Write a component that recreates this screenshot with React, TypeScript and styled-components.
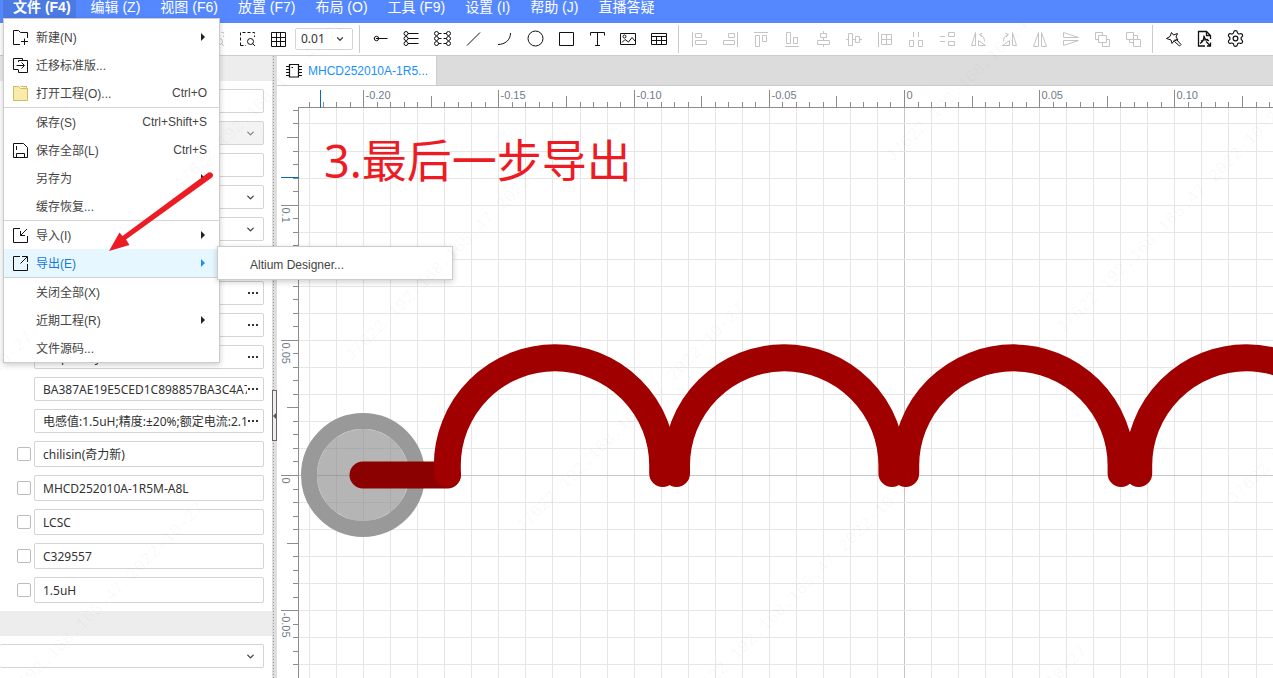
import React, { useEffect, useState } from 'react';
import styled, { createGlobalStyle, css } from 'styled-components';
import { ChevronDown, Settings } from 'lucide-react';

const uiFont = '"Liberation Sans", "Noto Sans CJK SC", sans-serif';
const formFont = '"Noto Sans", "Noto Sans CJK SC", sans-serif';

const GlobalStyle = createGlobalStyle`
  * { box-sizing: border-box; }
  body { margin: 0; overflow: hidden; background: #fff; font-family: ${uiFont}; font-size: 12px; color: #333; }
  button, input, select { font: inherit; color: inherit; margin: 0; }
  button { border: 0; background: none; padding: 0; }
  ul { list-style: none; margin: 0; padding: 0; }
`;

const Shell = styled.div`
  position: relative;
  display: flex;
  flex-direction: column;
  height: 100vh;
  overflow: hidden;
`;

/* ---------- Menu bar and drop-down menus ---------- */

const MenuBar = styled.nav`
  position: relative;
  z-index: 5;
  display: flex;
  align-items: flex-start;
  gap: 5px;
  flex: none;
  height: 23px;
  padding-left: 3px;
  background: #5588ff;
`;

const MenuTitle = styled.button<{ $open?: boolean }>`
  height: 18px;
  padding: 0 5px 3px 10px;
  font-size: 14px;
  line-height: 15px;
  white-space: nowrap;
  color: #fff;
  ${(p) => p.$open && css`background: #4c7ae5; font-weight: bold;`}
`;

const Dropdown = styled.ul`
  position: absolute;
  top: 18px;
  left: 3px;
  width: 217px;
  padding-top: 4px;
  background: #fff;
  border: 1px solid #ccc;
  box-shadow: 0 2px 6px rgba(0, 0, 0, 0.2);
`;

const MenuEntry = styled.li<{ $divided?: boolean }>`
  position: relative;
  ${(p) => p.$divided && css`border-bottom: 1px solid #d4d4d4;`}
`;

const MenuButton = styled.button<{ $active?: boolean }>`
  display: grid;
  grid-template-columns: 16px 1fr auto;
  align-items: center;
  column-gap: 7px;
  width: 100%;
  height: 28px;
  padding: 0 12px 0 9px;
  text-align: left;
  color: ${(p) => (p.$active ? '#1677e0' : '#444')};
  background: ${(p) => (p.$active ? '#e6f7ff' : 'transparent')};
  svg { color: #111; }
`;

const MenuLabel = styled.span`
  padding-bottom: 2px;
`;

const SubArrow = styled.span<{ $active?: boolean }>`
  width: 0;
  height: 0;
  margin-right: 2px;
  border: 4px solid transparent;
  border-left: 4px solid ${(p) => (p.$active ? '#1890ff' : '#222')};
  border-right: 0;
`;

const SubMenu = styled.ul`
  position: absolute;
  top: -3px;
  left: 213px;
  width: 236px;
  padding-top: 4px;
  background: #fff;
  border: 1px solid #ccc;
  box-shadow: 0 2px 6px rgba(0, 0, 0, 0.2);
`;

const SubMenuButton = styled.button`
  width: 100%;
  height: 28px;
  padding: 0 32px;
  text-align: left;
  color: #444;
`;

/* ---------- Toolbar ---------- */

const Toolbar = styled.div`
  display: flex;
  align-items: flex-start;
  flex: none;
  height: 33px;
  padding-left: 201px;
  background: #fff;
  border-bottom: 1px solid #ccc;
`;

const ToolButton = styled.button<{ $disabled?: boolean }>`
  display: flex;
  align-items: center;
  justify-content: center;
  flex: none;
  width: 31px;
  height: 31px;
  color: ${(p) => (p.$disabled ? '#c4c4c4' : '#111')};
`;

const Divider = styled.span`
  flex: none;
  width: 1px;
  height: 28px;
  margin: 2px 5px 0 3px;
  background: #ccc;
`;

const SelectBox = styled.span<{ $tone?: 'muted' | 'tool' | 'open' }>`
  display: grid;
  align-items: center;
  height: 24px;
  border: 1px solid #d4d4d4;
  border-radius: 2px;
  background: ${(p) => (p.$tone === 'muted' ? '#f3f3f3' : '#fff')};
  select, svg { grid-area: 1 / 1; }
  svg { justify-self: end; margin-right: 7px; color: ${(p) => (p.$tone === 'muted' ? '#888' : '#444')}; pointer-events: none; }
  ${(p) => p.$tone === 'tool' && css`
    flex: none;
    width: 58px;
    height: 22px;
    margin: 5px 3px 0 1px;
  `}
  ${(p) => p.$tone === 'open' && css`border-left: 0;`}
`;

const Select = styled.select`
  appearance: none;
  width: 100%;
  height: 20px;
  padding: 0 20px 0 5px;
  border: 0;
  background: transparent;
  font-family: ${formFont};
  line-height: 20px;
  outline: none;
`;

/* ---------- Property panel ---------- */

const Workspace = styled.div`
  display: flex;
  flex: 1;
  min-height: 0;
`;

const Panel = styled.aside`
  flex: none;
  width: 272px;
  overflow: hidden;
  background: #fff;
`;

const SectionBand = styled.div`
  height: 25px;
  background: #ededed;
`;

const FieldList = styled.div`
  display: flex;
  flex-direction: column;
  gap: 8px;
  padding: 8px 8px 8px 17px;
`;

const FieldRow = styled.div`
  display: grid;
  grid-template-columns: 14px minmax(0, 1fr);
  column-gap: 3px;
  align-items: center;
  > :last-child { grid-column: 2; }
`;

const CheckBox = styled.input`
  appearance: none;
  width: 14px;
  height: 14px;
  border: 1px solid #bbb;
  border-radius: 2px;
  background: #fff;
`;

const FieldBox = styled.span<{ $tall?: boolean }>`
  display: flex;
  align-items: center;
  height: ${(p) => (p.$tall ? 26 : 24)}px;
  border: 1px solid #d4d4d4;
  border-radius: 2px;
  background: #fff;
`;

const TextField = styled.input`
  flex: 1;
  min-width: 0;
  height: 20px;
  padding: 0;
  margin-left: 8px;
  border: 0;
  background: transparent;
  font-family: ${formFont};
  color: #333;
  outline: none;
`;

const MoreButton = styled.button`
  display: flex;
  justify-content: center;
  gap: 2px;
  width: 16px;
  padding-right: 4px;
  i { width: 2px; height: 2px; background: #333; }
`;

const BottomField = styled.div`
  padding: 8px 8px 0 0;
`;

const Splitter = styled.div`
  display: flex;
  flex-direction: column;
  flex: none;
  width: 5px;
  background:
    repeating-linear-gradient(to bottom, #999 0 1px, transparent 1px 3px) 1px 0 / 1px 100% no-repeat,
    #dedede;
`;

const CollapseHandle = styled.button`
  display: flex;
  align-items: center;
  width: 5px;
  height: 51px;
  margin-top: 334px;
  border: 1px solid #6f6262;
  background: #eee;
`;

/* ---------- Document area ---------- */

const Main = styled.main`
  display: flex;
  flex-direction: column;
  flex: 1;
  min-width: 0;
`;

const TabStrip = styled.div`
  display: flex;
  flex: none;
  height: 30px;
  background: #dcdcdc;
  border-bottom: 1px solid #ccc;
`;

const Tab = styled.button`
  display: flex;
  align-items: center;
  gap: 7px;
  padding: 0 8px 0 9px;
  background: #fff;
  border-right: 1px solid #ccc;
  color: #1890ff;
  svg { color: #111; }
`;

const CanvasArea = styled.div`
  position: relative;
  flex: 1;
  min-height: 0;
  > svg { display: block; }
`;

const Note = styled.p`
  position: absolute;
  top: 47px;
  left: 47px;
  margin: 0;
  font-family: ${formFont};
  font-size: 45px;
  line-height: 56px;
  white-space: nowrap;
  color: #ed1c24;
`;

const Overlay = styled.svg`
  position: absolute;
  inset: 0;
  z-index: 10;
  width: 100%;
  height: 100%;
  pointer-events: none;
`;

const Glyph = ({ children, size = 15 }: { children: React.ReactNode; size?: number }) => (
  <svg width={size} height={size} viewBox="0 0 15 15" overflow="visible" fill="none" stroke="currentColor" aria-hidden="true">
    {children}
  </svg>
);

const rotateShape = (
  <>
    <path d="M4.500 1.500L.5 14.500H4.500ZM7.500 9.500L14.500 14.500H7.500Z" />
    <path d="M9 3.500C12 4.500 13.500 7 13.500 10.500M11.500 2L8.500 3.500L11 6" />
  </>
);

const drawTools: [string, React.ReactNode][] = [
  ['Pin', <><circle cx="3.500" cy="7.500" r="2.200" /><path d="M1 7.500H2M3 7.500H14.500" /></>],
  ['Pin row', <>{[2.5, 7.5, 12.5].map((y) => <g key={y}><circle cx="2" cy={y} r="2" /><path d={`M4 ${y}H14.500`} /></g>)}</>],
  ['Pin block', <>{[2.5, 7.5, 12.5].map((y) => <g key={y}><circle cx="1.500" cy={y} r="2" /><circle cx="13.500" cy={y} r="2" /><path d={`M3.500 ${y}H6.500M8.500 ${y}H11.500`} /></g>)}</>],
  ['Line', <path d="M1 14.500L14 1.500" />],
  ['Arc', <path d="M1 13.500C8 13.500 13.500 9 13.500 2" />],
  ['Circle', <circle cx="7.500" cy="7.500" r="7.500" />],
  ['Rectangle', <path d="M.5 1.500H14.500V14.500H.5Z" />],
  ['Text', <path d="M.5 4.500V1.500H14.500V4.500M7.500 1.500V14.500M5 14.500H10" />],
  ['Image', <><path d="M-.5 2.500H14.500V13.500H-.5Z" /><circle cx="3.500" cy="5.500" r="1.500" /><path d="M1 11.500L4 8.500L7.500 11L11 6.500L14 10" /></>],
  ['Table', <path d="M-.5 2.500H14.500V13.500H-.5ZM-.5 5.500H14.500M-.5 9.500H14.500M4.500 5.500V13.500M9.500 5.500V13.500" />],
];

const arrangeTools: [string, React.ReactNode][] = [
  ['Align left', <path d="M.5 1V16M3.500 2.500H9.500V6.500H3.500ZM3.500 9.500H14.500V13.500H3.500Z" />],
  ['Align right', <path d="M14.500 1V16M5.500 2.500H11.500V6.500H5.500ZM.5 9.500H11.500V13.500H.5Z" />],
  ['Align top', <path d="M0 1.500H14M1.500 4.500H5.500V15.500H1.500ZM8.500 4.500H12.500V10.500H8.500Z" />],
  ['Align bottom', <path d="M0 15.500H14M1.500 1.500H5.500V12.500H1.500ZM8.500 6.500H12.500V12.500H8.500Z" />],
  ['Align centre', <path d="M7.500 0V2.500M7.500 6.500V9.500M7.500 13.500V16M4.500 2.500H10.500V6.500H4.500ZM1.500 9.500H13.500V13.500H1.500Z" />],
  ['Align middle', <path d="M-1 8.500H1.500M5.500 8.500H8.500M12.500 8.500H15M1.500 2.500H5.500V14.500H1.500ZM8.500 5.500H12.500V11.500H8.500Z" />],
  ['Align grid', <path d="M.5 1V16M3.500 3.500H13.500V13.500H3.500ZM8.500 3.500V13.500M3.500 8.500H13.500" />],
  ['Distribute horizontally', <path d="M4.500 1V6M9.500 1V6M.5 9.500H4.500V15.500H.5ZM9.500 9.500H13.500V15.500H9.500Z" />],
  ['Distribute vertically', <path d="M0 5.500H5M0 10.500H5M8.500 1.500H14.500V5.500H8.500ZM8.500 10.500H14.500V14.500H8.500Z" />],
  ['Rotate left', rotateShape],
  ['Rotate right', <g transform="translate(15 0) scale(-1 1)">{rotateShape}</g>],
  ['Flip horizontally', <path d="M5.500 1.500L.5 15.500H5.500ZM8.500 1.500L13.500 15.500H8.500Z" />],
  ['Flip vertically', <path d="M-.5 1.500L14.500 6.500H-.5ZM14.500 9.500H-.5V14.500Z" />],
  ['Bring forward', <path d="M3.500 8.500H.5V1.500H7.500V4.500M3.500 4.500H11.500V11.500H3.500ZM11.500 8.500H14.500V15.500H7.500V11.500" />],
  ['Send backward', <path d="M.5 1.500H7.500V8.500H.5ZM7.500 4.500H11.500V8.500M3.500 8.500V11.500H7.500M7.500 8.500H14.500V15.500H7.500Z" />],
];

const selectZoom = (
  <>
    <path d="M.5 14.500V1.500H14.500V6M.5 14.500H6" strokeDasharray="3 2" />
    <circle cx="10.500" cy="10.500" r="3" /><path d="M12.500 12.500L15 15" />
  </>
);

const menuTitles = ['编辑 (Z)', '视图 (F6)', '放置 (F7)', '布局 (O)', '工具 (F9)', '设置 (I)', '帮助 (J)', '直播答疑'];

type Entry = { label: string; icon?: React.ReactNode; keys?: string; more?: boolean; active?: boolean; divided?: boolean };

const fileMenu: Entry[] = [
  { label: '新建(N)', more: true, icon: <path d="M7 14.500H.5V.5H5.500L7.500 2.500H14.500V8M11.500 8.500V15M8 11.500H15" /> },
  { label: '迁移标准版...', icon: <path d="M5 11.500H.5V.5H9.500V2.500M5.500 4V2.500H14.500V14.500H5.500V11.500M3.500 7.500H11M8.500 4.500L11.500 7.500L8.500 10.500" /> },
  { label: '打开工程(O)...', keys: 'Ctrl+O', divided: true, icon: <path d="M.5 .5H5.500L7.500 2.500H14.500V14.500H.5ZM7.500 .5H13.500V2.500" fill="#f9ecab" stroke="#d0bb62" /> },
  { label: '保存(S)', keys: 'Ctrl+Shift+S' },
  { label: '保存全部(L)', keys: 'Ctrl+S', icon: <path d="M.5 .5H10.500L14.500 4.500V14.500H.5ZM3.500 14.500V10.500H11.500V14.500M3.500 3V7" /> },
  { label: '另存为', more: true },
  { label: '缓存恢复...', divided: true },
  { label: '导入(I)', more: true, icon: <path d="M7 .5H.5V14.500H14.500V8M14 1L7.500 7.500M7.500 3V7.500H12" /> },
  { label: '导出(E)', more: true, active: true, divided: true, icon: <path d="M7 .5H.5V14.500H14.500V8M7.500 7.500L14 1M9 .5H14.500V6" /> },
  { label: '关闭全部(X)' },
  { label: '近期工程(R)', more: true },
  { label: '文件源码...' },
];

type Field = { name: string; kind: 'text' | 'select' | 'more'; value?: string; muted?: boolean; check?: boolean };

const fields: Field[] = [
  { name: 'Title', kind: 'text' },
  { name: 'Type', kind: 'select', muted: true },
  { name: 'Name', kind: 'text' },
  { name: 'Class', kind: 'select' },
  { name: 'Subclass', kind: 'select' },
  { name: 'Tags', kind: 'text' },
  { name: 'Symbol', kind: 'more' },
  { name: 'Footprint', kind: 'more' },
  { name: 'Model', kind: 'more', value: 'Chip array' },
  { name: 'Image', kind: 'more', value: 'BA387AE19E5CED1C898857BA3C4A7' },
  { name: 'Description', kind: 'more', value: '电感值:1.5uH;精度:±20%;额定电流:2.1A' },
  { name: 'Manufacturer', kind: 'text', check: true, value: 'chilisin(奇力新)' },
  { name: 'Part number', kind: 'text', check: true, value: 'MHCD252010A-1R5M-A8L' },
  { name: 'Supplier', kind: 'text', check: true, value: 'LCSC' },
  { name: 'Supplier part', kind: 'text', check: true, value: 'C329557' },
  { name: 'Value', kind: 'text', check: true, value: '1.5uH' },
];

const FieldControl = ({ field }: { field: Field }) => {
  if (field.kind === 'select') {
    return (
      <SelectBox $tone={field.muted ? 'muted' : undefined}>
        <Select aria-label={field.name} />
        <ChevronDown size={11} strokeWidth={3} />
      </SelectBox>
    );
  }
  return (
    <FieldBox $tall={field.check}>
      <TextField aria-label={field.name} defaultValue={field.value} />
      {field.kind === 'more' && <MoreButton aria-label={`Edit ${field.name}`}><i /><i /><i /></MoreButton>}
    </FieldBox>
  );
};

/* Ruler geometry: 0.005 in per tick, with the sheet origin given in canvas pixels. */
const STEP = 13.52;
const ORIGIN = { x: 627, y: 389 };
const RULER = 21;
const LABEL_ROOM = 30;
const range = (from: number, to: number) => Array.from({ length: to - from + 1 }, (_, i) => from + i);
const tickLength = (k: number) => (k % 10 === 0 ? 17 : k % 5 === 0 ? 11 : 5);
const ticks = (origin: number, extent: number) =>
  range(Math.ceil((RULER - origin) / STEP), Math.floor((extent - origin) / STEP))
    .map((k) => ({ k, p: Math.round(origin + k * STEP) + 0.5 }));
const xLabel = (k: number) => (k === 0 ? '0' : (k * 0.005).toFixed(2));
const yLabel = (k: number) => (k === 0 ? '0' : String(-k * 0.005));
const WINDINGS = [278, 507.2, 736.4, 969.4];

const useWindowSize = () => {
  const [size, setSize] = useState({ width: window.innerWidth, height: window.innerHeight });
  useEffect(() => {
    const update = () => setSize({ width: window.innerWidth, height: window.innerHeight });
    window.addEventListener('resize', update);
    return () => window.removeEventListener('resize', update);
  }, []);
  return size;
};

const Drawing = () => {
  const size = useWindowSize();
  const width = size.width - 277;
  const height = size.height - 86;
  const xTicks = ticks(ORIGIN.x, width);
  const yTicks = ticks(ORIGIN.y, height);
  return (
    <svg width="100%" height="100%" fontFamily={uiFont} fontSize="11">
      <g stroke="#e6e6e6">
        {xTicks.filter((t) => t.k % 2 === 0).map((t) => <line key={t.k} x1={t.p} x2={t.p} y1={RULER} y2="100%" stroke={t.k === 0 ? '#c6c6c6' : undefined} />)}
        {yTicks.filter((t) => t.k % 2 === 0).map((t) => <line key={t.k} y1={t.p} y2={t.p} x1={RULER} x2="100%" stroke={t.k === 0 ? '#c6c6c6' : undefined} />)}
      </g>
      <circle cx="86" cy="389" r="46" fill="#848484" fillOpacity=".6" />
      <circle cx="86" cy="389" r="54" fill="none" stroke="#999" strokeWidth="16" />
      <g fill="none" strokeWidth="27" strokeLinecap="round">
        <path d="M86 389H170.500" stroke="#8b0000" />
        {WINDINGS.map((c) => (
          <path key={c} d={`M${c - 107.7} 387.500V379.500A107.700 107.700 0 0 1 ${c + 107.7} 379.500V387.500`} stroke="#a00000" />
        ))}
      </g>
      <g stroke="#8c8c8c">
        <path d={`M${RULER} 21.500H${width}M21.500 ${RULER}V${height}`} />
        {xTicks.map((t) => <line key={t.k} x1={t.p} x2={t.p} y1={RULER - tickLength(t.k)} y2={RULER} />)}
        {yTicks.map((t) => <line key={t.k} y1={t.p} y2={t.p} x1={RULER - tickLength(t.k)} x2={RULER} />)}
      </g>
      <g fill="#6f7b88">
        {xTicks.filter((t) => t.k % 10 === 0 && t.p < width - LABEL_ROOM).map((t) => <text key={t.k} x={t.p + 2} y="13">{xLabel(t.k)}</text>)}
        {yTicks.filter((t) => t.k % 10 === 0 && t.p < height - LABEL_ROOM).map((t) => <text key={t.k} transform={`translate(5 ${t.p + 2}) rotate(90)`}>{yLabel(t.k)}</text>)}
      </g>
      <path d="M43.500 4V22M4 91.500H22" stroke="#0a67c2" />
    </svg>
  );
};

const stampRows = range(-5, 4).flatMap((a) => range(-2, 4).map((b) => ({ x: 518 + a * 171 + b * 370, y: 533 + a * 171 - b * 370 })))
  .filter((s) => s.x > -230 && s.x < 1273 && s.y > 0 && s.y < 900);

export default function App() {
  return (
    <Shell>
      <GlobalStyle />
      <MenuBar>
        <MenuTitle $open aria-expanded="true">文件 (F4)</MenuTitle>
        {menuTitles.map((title) => <MenuTitle key={title}>{title}</MenuTitle>)}
        <Dropdown>
          {fileMenu.map((item) => (
            <MenuEntry key={item.label} $divided={item.divided}>
              <MenuButton $active={item.active}>
                {item.icon ? <Glyph>{item.icon}</Glyph> : <span />}
                <MenuLabel>{item.label}</MenuLabel>
                {item.more ? <SubArrow $active={item.active} /> : <span>{item.keys}</span>}
              </MenuButton>
              {item.active && (
                <SubMenu>
                  <li><SubMenuButton>Altium Designer...</SubMenuButton></li>
                </SubMenu>
              )}
            </MenuEntry>
          ))}
        </Dropdown>
      </MenuBar>

      <Toolbar>
        <ToolButton $disabled aria-label="Zoom to selection"><Glyph>{selectZoom}</Glyph></ToolButton>
        <ToolButton aria-label="Zoom to area"><Glyph>{selectZoom}</Glyph></ToolButton>
        <ToolButton aria-label="Grid"><Glyph><path d="M.5 1.500H14.500V15.500H.5ZM5.500 1.500V15.500M9.500 1.500V15.500M.5 6.500H14.500M.5 10.500H14.500" /></Glyph></ToolButton>
        <SelectBox $tone="tool">
          <Select aria-label="Grid size" defaultValue="0.01"><option>0.01</option></Select>
          <ChevronDown size={10} strokeWidth={3} />
        </SelectBox>
        <Divider />
        {drawTools.map(([name, icon]) => <ToolButton key={name} aria-label={name}><Glyph>{icon}</Glyph></ToolButton>)}
        <Divider />
        {arrangeTools.map(([name, icon]) => <ToolButton key={name} $disabled aria-label={name}><Glyph>{icon}</Glyph></ToolButton>)}
        <Divider />
        <ToolButton aria-label="Wizard">
          <Glyph>
            <path d="M5.500 1.500L7.500 4L11.500 2.500L10 6L12 9L8.500 9L6 12.500L5 9L.5 7.500L4 5.500Z" />
            <path d="M8.500 10.500L10.500 8.500L15 13.500L13.500 15Z" />
          </Glyph>
        </ToolButton>
        <ToolButton aria-label="Export document">
          <Glyph>
            <path strokeWidth="1.300" d="M8 15H1.500V.5H9.500L13.500 4.500V8M9.500 .5V4.500H13.500" />
            <path strokeWidth="1.300" d="M3 12.500C6 11 7 8 7 4.500C7.500 8 9 9.500 12 9.500M4 10C7 8.500 9 8.500 11 8.500M9 10.500L13.500 15M13.500 11.500V15H10" />
          </Glyph>
        </ToolButton>
        <ToolButton aria-label="Settings"><Settings size={19} strokeWidth={1.5} /></ToolButton>
      </Toolbar>

      <Workspace>
        <Panel>
          <SectionBand />
          <FieldList>
            {fields.map((field) => (
              <FieldRow key={field.name}>
                {field.check && <CheckBox type="checkbox" aria-label={`Show ${field.name}`} />}
                <FieldControl field={field} />
              </FieldRow>
            ))}
          </FieldList>
          <SectionBand />
          <BottomField>
            <SelectBox $tone="open">
              <Select aria-label="Display" />
              <ChevronDown size={11} strokeWidth={3} />
            </SelectBox>
          </BottomField>
        </Panel>
        <Splitter>
          <CollapseHandle aria-label="Collapse panel">
            <svg width="3" height="6" viewBox="0 0 3 6" aria-hidden="true"><path d="M3 0V6L0 3Z" fill="#5f5555" /></svg>
          </CollapseHandle>
        </Splitter>
        <Main>
          <TabStrip>
            <Tab>
              <Glyph>
                <path strokeWidth="1.200" d="M3.500 1.500H12.500V14H3.500ZM0 3.500H3M0 6.500H3M0 9.500H3M0 12.500H3M13 3.500H16M13 6.500H16M13 9.500H16M13 12.500H16M5.500 4.500H7" />
              </Glyph>
              <span>MHCD252010A-1R5...</span>
            </Tab>
          </TabStrip>
          <CanvasArea>
            <Drawing />
            <Note>3.最后一步导出</Note>
          </CanvasArea>
        </Main>
      </Workspace>

      <Overlay aria-hidden="true">
        <path d="M208.500 172.500Q211.500 171.500 213 174.500Q213.500 176 212 177.500L126 239.500L129.500 245L109 251L119.500 232.500L122.500 236Z" fill="#ed1c24" />
        <g fill="#808080" fillOpacity=".06" fontFamily='"Liberation Mono", monospace' fontSize="17">
          {stampRows.map((s) => (
            <text key={`${s.x},${s.y}`} transform={`translate(${s.x + 4} ${s.y}) rotate(-45)`}>J7622 192.168.165.47 2022-10-27</text>
          ))}
        </g>
      </Overlay>
    </Shell>
  );
}
